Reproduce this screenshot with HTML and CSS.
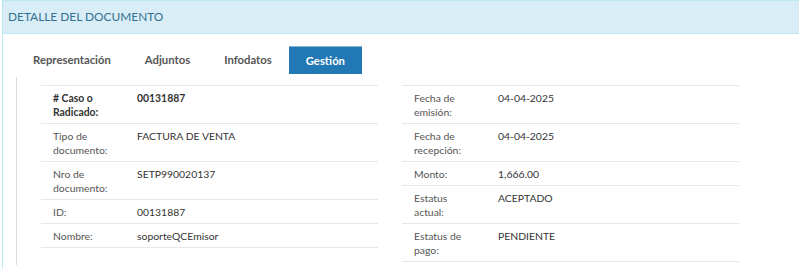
FILE: index.html
```html
<!DOCTYPE html>
<html lang="es">
<head>
<meta charset="utf-8">
<title>Detalle del documento</title>
<link rel="stylesheet" href="styles.css">
</head>
<body>
<div class="panel">
  <div class="panel-heading">DETALLE DEL DOCUMENTO</div>
  <div class="panel-body">
    <ul class="tabs">
      <li class="tab">Representación</li>
      <li class="tab">Adjuntos</li>
      <li class="tab">Infodatos</li>
      <li class="tab active">Gestión</li>
    </ul>
    <div class="tab-content">
      <div class="cols">
        <table class="info">
          <tr class="strong"><td class="lbl"># Caso o Radicado:</td><td class="val">00131887</td></tr>
          <tr><td class="lbl">Tipo de documento:</td><td class="val">FACTURA DE VENTA</td></tr>
          <tr><td class="lbl">Nro de documento:</td><td class="val">SETP990020137</td></tr>
          <tr><td class="lbl">ID:</td><td class="val">00131887</td></tr>
          <tr><td class="lbl">Nombre:</td><td class="val">soporteQCEmisor</td></tr>
        </table>
        <table class="info">
          <tr><td class="lbl">Fecha de emisión:</td><td class="val">04-04-2025</td></tr>
          <tr><td class="lbl">Fecha de recepción:</td><td class="val">04-04-2025</td></tr>
          <tr><td class="lbl">Monto:</td><td class="val">1,666.00</td></tr>
          <tr><td class="lbl">Estatus actual:</td><td class="val">ACEPTADO</td></tr>
          <tr><td class="lbl">Estatus de pago:</td><td class="val">PENDIENTE</td></tr>
        </table>
      </div>
    </div>
  </div>
</div>
</body>
</html>
```
FILE: styles.css
```css
html, body {
  margin: 0;
  padding: 0;
  background: #fff;
}
body {
  font-family: Lato, "Open Sans", sans-serif;
  color: #333;
  height: 269px;
  overflow: hidden;
}
.panel {
  margin-left: 2px;
  border-left: 1px solid #bce8f1;
  border-top: 1px solid #bce8f1;
  height: 268px;
}
.panel-heading {
  background: #d9edf7;
  border-bottom: 1px solid #bce8f1;
  color: #31708f;
  font-size: 11.9px;
  height: 32px;
  line-height: 32px;
  padding-left: 5px;
}
.panel-body {
  padding: 12px 0 0 13px;
}
.tabs {
  list-style: none;
  margin: 0;
  padding: 0;
  display: flex;
}
.tab {
  font-size: 11.3px;
  font-weight: bold;
  color: #555;
  padding: 0 17px;
  height: 28px;
  line-height: 28px;
  box-sizing: border-box;
}
.tab.active {
  background: #2178b4;
  color: #fff;
  border-top: 1px solid #8fb3cf;
  line-height: 27px;
}
.tab-content {
  margin-top: 3px;
  border-left: 1px solid #ddd;
  padding: 8px 0 0 24px;
  height: 180px;
}
.cols {
  display: flex;
  align-items: flex-start;
  gap: 24px;
}
.info {
  width: 337px;
  border-collapse: collapse;
  border-top: 1px solid #e8e8e8;
  font-size: 10.4px;
  line-height: 14px;
}
.info td {
  border-bottom: 1px solid #e8e8e8;
  padding: 5px 0 4px 0;
  vertical-align: top;
}
.info .lbl {
  width: 62px;
  padding-left: 12px;
  padding-right: 22px;
  color: #555;
}
.info .val {
  color: #333;
}
.info tr.strong td {
  font-weight: bold;
  color: #333;
}
```
